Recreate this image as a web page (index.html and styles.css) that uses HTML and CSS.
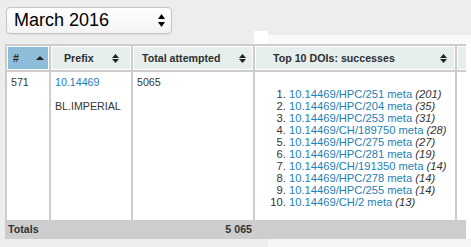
FILE: index.html
```html
<!DOCTYPE html>
<html>
<head>
<meta charset="utf-8">
<title>Prefix report</title>
<link rel="stylesheet" href="styles.css">
</head>
<body>
<div class="top">
  <div class="select">
    <span class="select-label">March 2016</span>
    <svg class="select-arrows" width="7" height="13" viewBox="0 0 7 13"><polygon points="0,5 3.5,0 7,5"/><polygon points="0,8 7,8 3.5,13"/></svg>
  </div>
  <div class="strip"><div class="strip-notch"></div><div class="strip-band"></div></div>
</div>
<div class="table-row">
  <div class="table-clip">
    <table class="stats">
      <thead>
        <tr>
          <th class="c-rank sorted"><div class="th-in"><span>#</span><svg class="sort" width="8" height="4" viewBox="0 0 8 4"><polygon points="0,4 4,0 8,4"/></svg></div></th>
          <th class="c-prefix"><div class="th-in"><span>Prefix</span><svg class="sort" width="7" height="9" viewBox="0 0 7 9"><polygon points="0,4 3.5,0 7,4"/><polygon points="0,5 7,5 3.5,9"/></svg></div></th>
          <th class="c-total"><div class="th-in"><span>Total attempted</span><svg class="sort" width="7" height="9" viewBox="0 0 7 9"><polygon points="0,4 3.5,0 7,4"/><polygon points="0,5 7,5 3.5,9"/></svg></div></th>
          <th class="c-top"><div class="th-in"><span>Top 10 DOIs: successes</span><svg class="sort" width="7" height="9" viewBox="0 0 7 9"><polygon points="0,4 3.5,0 7,4"/><polygon points="0,5 7,5 3.5,9"/></svg></div></th>
          <th class="c-extra"></th>
        </tr>
      </thead>
      <tbody>
        <tr>
          <td>571</td>
          <td><a href="#">10.14469</a><div class="owner">BL.IMPERIAL</div></td>
          <td>5065</td>
          <td>
            <ol class="dois">
              <li><a href="#">10.14469/HPC/251 meta</a> <em>(201)</em></li>
              <li><a href="#">10.14469/HPC/204 meta</a> <em>(35)</em></li>
              <li><a href="#">10.14469/HPC/253 meta</a> <em>(31)</em></li>
              <li><a href="#">10.14469/CH/189750 meta</a> <em>(28)</em></li>
              <li><a href="#">10.14469/HPC/275 meta</a> <em>(27)</em></li>
              <li><a href="#">10.14469/HPC/281 meta</a> <em>(19)</em></li>
              <li><a href="#">10.14469/CH/191350 meta</a> <em>(14)</em></li>
              <li><a href="#">10.14469/HPC/278 meta</a> <em>(14)</em></li>
              <li><a href="#">10.14469/HPC/255 meta</a> <em>(14)</em></li>
              <li><a href="#">10.14469/CH/2 meta</a> <em>(13)</em></li>
            </ol>
          </td>
          <td></td>
        </tr>
      </tbody>
      <tfoot>
        <tr>
          <th class="f-label">Totals</th>
          <th></th>
          <th class="f-num">5 065</th>
          <th></th>
          <th></th>
        </tr>
      </tfoot>
    </table>
  </div>
  <div class="edge"></div>
</div>
<div class="bottom"><div class="bottom-band"></div></div>
</body>
</html>
```
FILE: styles.css
```css
body {
  margin: 0;
  background: #ededed;
  font-family: "Liberation Sans", Arial, sans-serif;
}

.top {
  display: flex;
  align-items: flex-end;
  height: 44px;
}

.select {
  align-self: flex-start;
  margin: 7px 0 0 6px;
  width: 166px;
  height: 27px;
  box-sizing: border-box;
  border: 1px solid #c4c4c4;
  border-radius: 4px;
  background: linear-gradient(#ffffff, #f3f3f3);
  box-shadow: 0 1px 1px rgba(0, 0, 0, 0.06);
  display: flex;
  align-items: center;
  padding: 0 6px 0 7px;
}

.select-label {
  flex: 1;
  font-size: 18px;
  line-height: 25px;
  color: #000;
}

.select-arrows {
  flex: none;
  fill: #000;
}

.strip {
  margin-left: auto;
  width: 217px;
  height: 13px;
  display: flex;
  align-items: flex-end;
}

.strip-notch {
  width: 14px;
  height: 13px;
  background: #fff;
}

.strip-band {
  flex: 1;
  height: 9px;
  background: #fafafa;
}

.table-row {
  display: flex;
  margin-left: 5px;
}

.table-clip {
  width: 461px;
  overflow: hidden;
  flex: none;
}

.edge {
  flex: 1;
  background: #fff;
}

.stats {
  border-collapse: separate;
  border-spacing: 2px;
  background: #cdcdcd;
  table-layout: fixed;
  width: 514px;
  font-size: 10.67px;
  color: #363636;
}

.stats thead th {
  box-sizing: border-box;
  background: #e6eeee;
  border: 1px solid #fff;
  padding: 4px;
  line-height: 14px;
  font-weight: bold;
  text-align: left;
  color: #2e2e2e;
}

.stats thead th.sorted {
  background: #8dbdd8;
}

.th-in {
  display: flex;
  align-items: center;
}

.sort {
  margin-left: auto;
  flex: none;
  fill: #222;
}

.c-rank { width: 42px; }
.stats thead th.c-rank { padding-left: 5px; }
.c-prefix { width: 80px; }
.stats thead th.c-prefix { padding-left: 12px; padding-right: 11px; }
.c-total { width: 120px; }
.stats thead th.c-total { padding-left: 8px; padding-right: 6px; }
.c-top { width: 200px; }
.stats thead th.c-top { padding-left: 17px; padding-right: 7px; }
.c-extra { width: 60px; }

.stats tbody td {
  background: #fff;
  padding: 4px;
  vertical-align: top;
  line-height: 12px;
}

.stats a {
  color: #1e7fb8;
  text-decoration: none;
}

.owner {
  margin-top: 12px;
}

.dois {
  margin: 12px 0 8px;
  padding-left: 30px;
  font-size: 11.2px;
  line-height: 12px;
  white-space: nowrap;
}

.dois em {
  color: #333;
}

.stats tfoot th {
  background: #cdcdcd;
  padding: 1px;
  line-height: 13px;
  font-weight: bold;
  color: #333;
  text-align: left;
}

.stats tfoot th.f-num {
  text-align: right;
}

.bottom {
  height: 8px;
  display: flex;
}

.bottom-band {
  margin-left: 268px;
  flex: 1;
  background: #f6f6f6;
}
```
